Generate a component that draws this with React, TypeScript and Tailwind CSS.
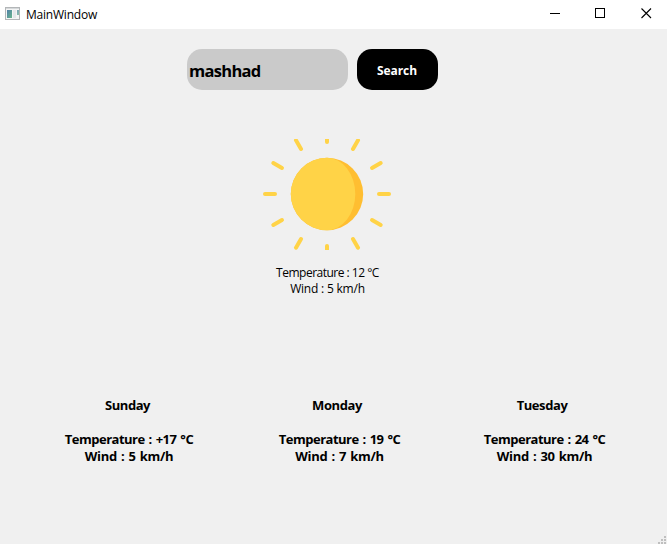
import React from "react";

type Forecast = {
  day: string;
  temperature: string;
  wind: string;
  column: string;
  dayStyle: string;
};

const forecasts: Forecast[] = [
  { day: "Sunday", temperature: "Temperature : +17 °C", wind: "Wind : 5 km/h", column: "ml-[64px] w-[130px]", dayStyle: "mr-[3px]" },
  { day: "Monday", temperature: "Temperature : 19 °C", wind: "Wind : 7 km/h", column: "ml-[85px] w-[121px]", dayStyle: "mr-[5px]" },
  { day: "Tuesday", temperature: "Temperature : 24 °C", wind: "Wind : 30 km/h", column: "ml-[84px] w-[121px]", dayStyle: "mr-[5px]" },
];

function TitleBar() {
  return (
    <header className="flex h-[29px] items-center bg-white">
      <svg className="ml-[5px] mb-[3px]" width="15" height="13" viewBox="0 0 15 13" shapeRendering="crispEdges">
        <defs>
          <linearGradient id="pane" x1="0" y1="0" x2="1" y2="1">
            <stop offset="0" stopColor="#5180a8" />
            <stop offset="1" stopColor="#68b58c" />
          </linearGradient>
        </defs>
        <rect width="15" height="13" fill="#b3b6b8" />
        <rect x="1" y="1" width="13" height="1" fill="#d5d8da" />
        <rect x="1" y="2" width="13" height="10" fill="#f4f5f5" />
        <rect x="2" y="3" width="5" height="8" fill="url(#pane)" />
        <rect x="8" y="3" width="3" height="8" fill="#e4e8ea" />
        <rect x="12" y="3" width="2" height="5" fill="url(#pane)" opacity="0.75" />
      </svg>
      <span className="ml-[6px] text-[12px] leading-4 tracking-[-0.22px]">MainWindow</span>
      <svg className="ml-auto mr-[15px] mb-[3px]" width="102" height="12" viewBox="0 0 102 12" fill="none" stroke="#000">
        <path d="M0 6.5H10" shapeRendering="crispEdges" />
        <rect x="45.5" y="1.5" width="9" height="9" shapeRendering="crispEdges" />
        <path d="M91.5 1.5L101 11M101 1.5L91.5 11" strokeWidth="1.1" />
      </svg>
    </header>
  );
}

function Sun() {
  return (
    <svg className="ml-[263px] mt-[49px] shrink-0" width="128" height="111" viewBox="263 139 128 111">
      <g stroke="#ffd347" strokeWidth="4" strokeLinecap="round">
        {Array.from({ length: 12 }, (_, i) => (
          <path key={i} d="M379 194H389" transform={`rotate(${i * 30} 327 194)`} />
        ))}
      </g>
      <circle cx="327" cy="194" r="36.2" fill="#ffbe31" />
      <path d="M327 157.8A36.2 36.2 0 0 0 327 230.2A28.3 36.2 0 0 0 327 157.8Z" fill="#ffd347" />
    </svg>
  );
}

function SizeGrip() {
  return (
    <svg className="absolute right-[1px] bottom-0" width="8" height="8" viewBox="0 0 8 8" fill="#bfbfbf" shapeRendering="crispEdges">
      <path d="M6 0h2v2h-2zM3 3h2v2h-2zM6 3h2v2h-2zM0 6h2v2h-2zM3 6h2v2h-2zM6 6h2v2h-2z" />
    </svg>
  );
}

export default function App() {
  return (
    <div className="relative flex h-[544px] w-[667px] flex-col overflow-hidden bg-[#f0f0f0] font-['Open_Sans','Noto_Sans',sans-serif] text-black">
      <TitleBar />
      <form className="ml-[187px] mt-[20px] flex h-[41px] gap-[9px]" onSubmit={(e) => e.preventDefault()}>
        <input
          className="w-[161px] rounded-[15px] bg-[#cacaca] pl-[2px] pt-[3px] text-[16.5px] font-bold tracking-[-0.7px] outline-none"
          defaultValue="mashhad"
          spellCheck={false}
        />
        <button className="w-[81px] rounded-[15px] bg-black pr-[1px] pt-[2px] text-[12px] font-bold tracking-[-0.1px] text-white">
          Search
        </button>
      </form>
      <Sun />
      <section className="ml-[263px] mt-[15px] w-[129px] whitespace-nowrap text-center text-[12px] leading-4">
        <p className="tracking-[-0.5px]">Temperature : 12 °C</p>
        <p className="tracking-[-0.2px]">Wind : 5 km/h</p>
      </section>
      <section className="mt-[100px] flex whitespace-nowrap text-[13px] font-bold leading-[17px]">
        {forecasts.map((f) => (
          <article key={f.day} className={`flex flex-col items-center ${f.column}`}>
            <h2 className={`tracking-[-0.42px] ${f.dayStyle}`}>{f.day}</h2>
            <p className="mt-[17px] tracking-[-0.5px] [word-spacing:1px]">{f.temperature}</p>
            <p className="tracking-[-0.3px] [word-spacing:1px]">{f.wind}</p>
          </article>
        ))}
      </section>
      <SizeGrip />
    </div>
  );
}
